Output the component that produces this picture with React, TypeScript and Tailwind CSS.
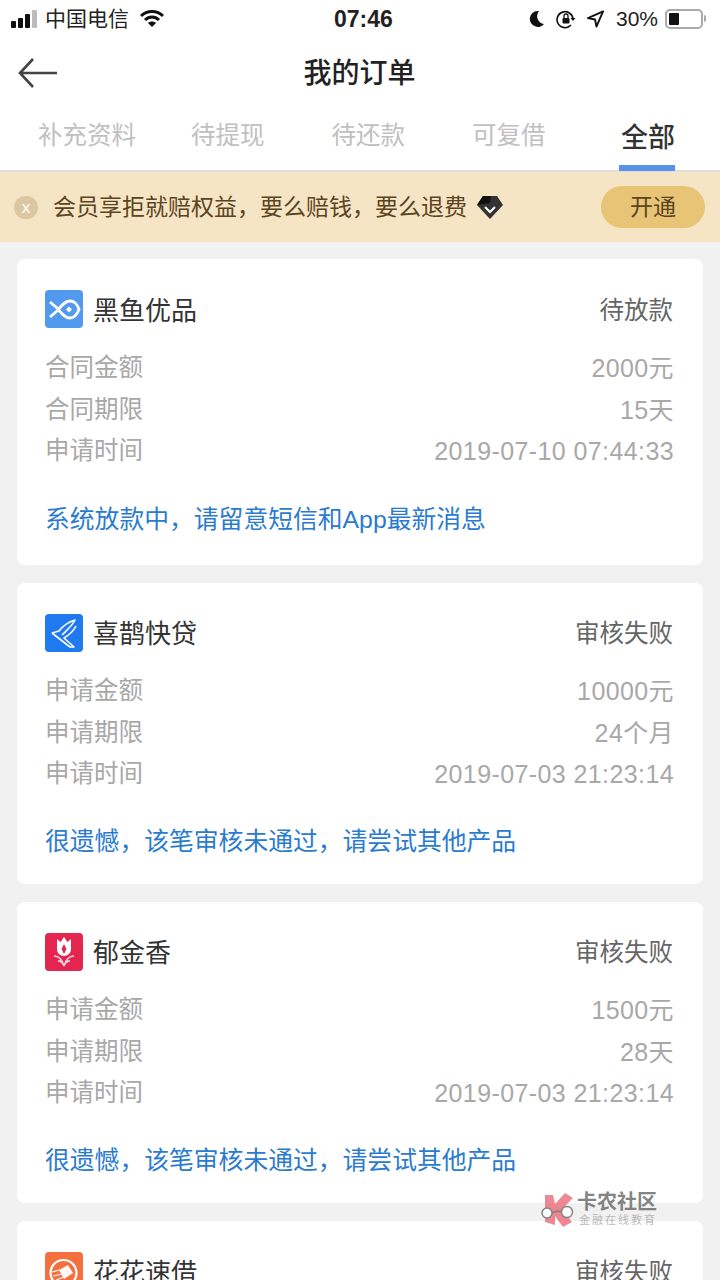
const cjk = "font-['Liberation_Sans','Noto_Sans_CJK_SC',sans-serif]";

function FishLogo() {
  return (
    <svg viewBox="0 0 38 38" className="h-[38px] w-[38px]">
      <rect width="38" height="38" rx="4" fill="#5299f0" />
      <path
        d="M5 12L12 18C16 23 20 28 25 28C30 28 33 22 34 19.5C33 16 30 11 25 11C20 11 16 16 12 21L5 27"
        fill="none"
        stroke="#fff"
        strokeWidth="2.8"
      />
      <path d="M24 16.5l3 3-3 3-3-3z" fill="#fff" />
    </svg>
  );
}

function BirdLogo() {
  return (
    <svg viewBox="0 0 38 38" className="h-[38px] w-[38px]">
      <rect width="38" height="38" rx="4" fill="#1f7af0" />
      <path d="M7 19L14 17C18 12 23 8 30 6C27 12 22 16 17 21" fill="none" stroke="#fff" strokeWidth="1.6" strokeLinejoin="round" />
      <path d="M7 19L25 33L29 33L19 24C24 21 29 16 31 12" fill="none" stroke="#fff" strokeWidth="1.6" strokeLinejoin="round" />
    </svg>
  );
}

function TulipLogo() {
  return (
    <svg viewBox="0 0 38 38" className="h-[38px] w-[38px]">
      <rect width="38" height="38" rx="4" fill="#e4254f" />
      <path d="M12 6l3.5 3L19 4l3.5 5L26 6v10c0 4-3 7-7 7s-7-3-7-7z" fill="#fff" />
      <path d="M19 11l2.5 5-2.5 5-2.5-5z" fill="#e4254f" />
      <path d="M9 23c4 0 8 3 10 10M29 23c-4 0-8 3-10 10M13 28c3 0 5 2 6 5M25 28c-3 0-5 2-6 5" fill="none" stroke="#fff" strokeWidth="1.4" opacity="0.85" />
    </svg>
  );
}

function FlowerLogo() {
  return (
    <svg viewBox="0 0 38 38" className="h-[38px] w-[38px]">
      <rect width="38" height="38" rx="4" fill="#f5703f" />
      <circle cx="18.5" cy="21" r="13" fill="none" stroke="#fff" strokeWidth="2.2" />
      <path d="M14 18l9-5 5 8-9 6z" fill="#fff" opacity="0.95" />
      <path d="M7 20l8-2M8 24l9-2M11 28l8-3" fill="none" stroke="#fff" strokeWidth="1.2" />
    </svg>
  );
}

type Row = [string, string];

type Order = {
  name: string;
  status: string;
  logo: React.ReactNode;
  rows: Row[];
  note: string;
  className: string;
  noteClassName: string;
  logoClassName: string;
};

const orders: Order[] = [
  {
    name: '黑鱼优品',
    status: '待放款',
    logo: <FishLogo />,
    rows: [
      ['合同金额', '2000元'],
      ['合同期限', '15天'],
      ['申请时间', '2019-07-10 07:44:33'],
    ],
    note: '系统放款中，请留意短信和App最新消息',
    className: 'h-[306px] pt-[31px]',
    noteClassName: 'mt-[32px]',
    logoClassName: '',
  },
  {
    name: '喜鹊快贷',
    status: '审核失败',
    logo: <BirdLogo />,
    rows: [
      ['申请金额', '10000元'],
      ['申请期限', '24个月'],
      ['申请时间', '2019-07-03 21:23:14'],
    ],
    note: '很遗憾，该笔审核未通过，请尝试其他产品',
    className: 'h-[301px] pt-[30px]',
    noteClassName: 'mt-[31px]',
    logoClassName: 'mt-[2px]',
  },
  {
    name: '郁金香',
    status: '审核失败',
    logo: <TulipLogo />,
    rows: [
      ['申请金额', '1500元'],
      ['申请期限', '28天'],
      ['申请时间', '2019-07-03 21:23:14'],
    ],
    note: '很遗憾，该笔审核未通过，请尝试其他产品',
    className: 'h-[301px] pt-[30px]',
    noteClassName: 'mt-[31px]',
    logoClassName: 'mt-[2px]',
  },
];

function CardHead({
  logo,
  name,
  status,
  logoClassName = '',
}: {
  logo: React.ReactNode;
  name: string;
  status: string;
  logoClassName?: string;
}) {
  return (
    <div className="flex h-[38px] items-center justify-between">
      <div className="flex items-center gap-[10px]">
        <div className={logoClassName}>{logo}</div>
        <span className="pt-[4px] text-[26px] text-[#333]">{name}</span>
      </div>
      <span className="mr-[1px] pt-[4px] text-[24.5px] text-[#666]">{status}</span>
    </div>
  );
}

function OrderCard({ order }: { order: Order }) {
  return (
    <div className={`flex flex-col rounded-lg bg-white pl-[28px] pr-[29px] ${order.className}`}>
      <CardHead logo={order.logo} name={order.name} status={order.status} logoClassName={order.logoClassName} />
      <div className="mt-[20px] flex flex-col">
        {order.rows.map(([label, value]) => (
          <div key={label} className="flex h-[41.5px] items-center justify-between text-[24.5px] text-[#a8a8a8]">
            <span>{label}</span>
            <span className="text-[25px] tracking-[0.4px]">{value}</span>
          </div>
        ))}
      </div>
      <div className={`text-[24.8px] leading-[30px] text-[#2a7bd0] ${order.noteClassName}`}>{order.note}</div>
    </div>
  );
}

const tabs = ['补充资料', '待提现', '待还款', '可复借'];

export default function App() {
  return (
    <div className={`relative h-[1280px] w-[720px] overflow-hidden bg-[#f1f1f1] ${cjk}`}>
      {/* status bar */}
      <div className="flex h-[37px] items-center justify-between bg-white pl-[11px] pr-[14px]">
        <div className="flex items-center">
          <div className="flex items-end gap-[2px]">
            <span className="h-[7px] w-[5px] rounded-[1px] bg-[#111]" />
            <span className="h-[10px] w-[5px] rounded-[1px] bg-[#111]" />
            <span className="h-[14px] w-[5px] rounded-[1px] bg-[#111]" />
            <span className="h-[18px] w-[5px] rounded-[1px] bg-[#bbb]" />
          </div>
          <span className="ml-[8px] text-[21px] text-[#222]">中国电信</span>
          <svg viewBox="0 0 24 18" className="ml-[11px] h-[18px] w-[24px]">
            <path d="M1 6c6-6 16-6 22 0M5 10c4-4 10-4 14 0" fill="none" stroke="#111" strokeWidth="3" />
            <path d="M8 13c2-2 6-2 8 0l-4 4z" fill="#111" />
          </svg>
        </div>
        <span className="absolute left-[334px] text-[23px] font-bold leading-[36px] text-[#222]">07:46</span>
        <div className="flex items-center">
          <svg viewBox="0 0 16 18" className="h-[18px] w-[16px]">
            <path d="M10 1a8 8 0 1 0 5 13A8 8 0 0 1 10 1z" fill="#111" />
          </svg>
          <svg viewBox="0 0 20 20" className="ml-[11px] h-[20px] w-[20px]">
            <path d="M15 16a8 8 0 1 1 2-6" fill="none" stroke="#111" strokeWidth="1.6" />
            <path d="M14.5 9h5l-2.5 3z" fill="#111" />
            <rect x="6.5" y="9" width="7" height="5.5" rx="1" fill="#111" />
            <path d="M8 9V7a2 2 0 0 1 4 0v2" fill="none" stroke="#111" strokeWidth="1.3" />
          </svg>
          <svg viewBox="0 0 18 18" className="ml-[11px] h-[18px] w-[17px]">
            <path d="M17 1L1 8l7.5 1.5L10 17z" fill="none" stroke="#111" strokeWidth="2" strokeLinejoin="round" />
          </svg>
          <span className="ml-[12px] text-[21px] text-[#222]">30%</span>
          <div className="ml-[7px] flex h-[20px] w-[38px] items-center rounded-[5px] border-2 border-[#aaa] pl-[2px]">
            <span className="h-[12px] w-[10px] rounded-[1px] bg-[#111]" />
          </div>
          <span className="ml-[1px] h-[7px] w-[2px] rounded-r bg-[#aaa]" />
        </div>
      </div>

      {/* header */}
      <div className="relative flex h-[63px] items-center justify-center bg-white">
        <svg viewBox="0 0 40 32" className="absolute left-[18px] top-[20px] h-[32px] w-[40px]">
          <path d="M39 16H3M15 2L2 16l13 14" fill="none" stroke="#444" strokeWidth="2.6" />
        </svg>
        <span className="pr-[1px] pt-[10px] text-[28px] font-medium text-[#222]">我的订单</span>
      </div>

      {/* tabs */}
      <div className="relative flex h-[72px] items-start border-b-2 border-[#e2dfda] bg-white">
        <div className="flex pl-[38px] pt-[18px] text-[24.5px] text-[#c0c0c0]">
          {tabs.map((tab) => (
            <span key={tab} className="mr-[67px] first:mr-[55px] last:mr-0">
              {tab}
            </span>
          ))}
        </div>
        <div className="absolute bottom-[-1px] left-[619px] flex w-[56px] flex-col items-center">
          <span className="ml-[2px] whitespace-nowrap text-[27px] font-medium leading-[40px] text-[#333]">全部</span>
          <span className="mt-[7px] h-[6px] w-[56px] bg-[#5692e8]" />
        </div>
      </div>

      {/* member banner */}
      <div className="flex h-[70px] items-center bg-[#f6e5c5] pl-[14px] pr-[15px]">
        <span className="flex h-[23px] w-[24px] items-center justify-center rounded-full bg-[#dbc8a0] text-[17px] leading-none text-white">
          x
        </span>
        <span className="ml-[15px] text-[23px] text-[#5a4421]">会员享拒就赔权益，要么赔钱，要么退费</span>
        <svg viewBox="0 0 28 25" className="ml-[9px] h-[25px] w-[28px]">
          <path d="M7 1h14l6 9-13 14L1 10z" fill="#333" />
          <path d="M7 1h8l-1 7-13 2z" fill="#111" />
          <path d="M9 12l5 5 5-5" fill="none" stroke="#fff" strokeWidth="2" />
        </svg>
        <span className="ml-auto flex h-[42px] w-[104px] items-center justify-center rounded-full bg-[#e8c476] text-[23px] text-[#5a4421]">
          开通
        </span>
      </div>

      {/* orders */}
      <div className="flex flex-col gap-[18px] px-[17px] pt-[17px]">
        {orders.map((order) => (
          <OrderCard key={order.name} order={order} />
        ))}
        <div className="rounded-lg bg-white pl-[28px] pr-[29px] pt-[31px]">
          <CardHead logo={<FlowerLogo />} name="花花速借" status="审核失败" />
        </div>
      </div>

      {/* watermark */}
      <div className="absolute left-[540px] top-[1192px] flex items-center opacity-80">
        <svg viewBox="0 0 36 36" className="h-[36px] w-[36px]">
          <path d="M5 3L13 3L15 12L25 1L33 6L22 17L32 30L23 35L15 24L15 33L5 30Z" fill="#ea6b78" />
          <circle cx="7" cy="21" r="5" fill="#fff" stroke="#666" strokeWidth="1.4" />
          <circle cx="27" cy="20" r="5.5" fill="#fff" stroke="#666" strokeWidth="1.4" />
          <path d="M12 21c3-2 7-2 10-1" fill="none" stroke="#666" strokeWidth="1.4" />
        </svg>
        <div className="ml-[1px] flex flex-col">
          <span className="text-[20px] font-bold leading-[21px] text-[#666]">卡农社区</span>
          <span className="pl-[2px] text-[11px] leading-[15px] tracking-[2px] text-[#aaa]">金融在线教育</span>
        </div>
      </div>
    </div>
  );
}
